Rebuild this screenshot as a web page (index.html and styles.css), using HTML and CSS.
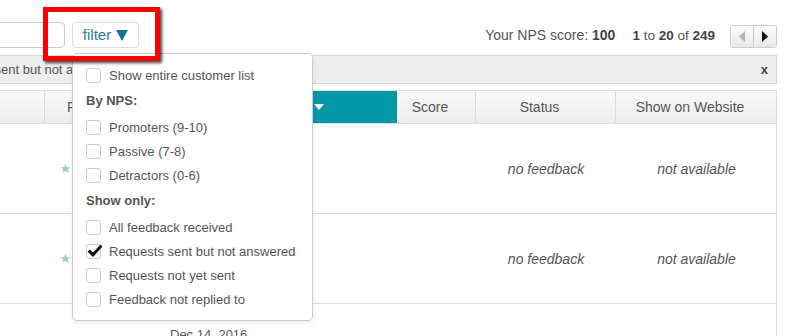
FILE: index.html
```html
<!DOCTYPE html>
<html>
<head>
<meta charset="utf-8">
<link rel="stylesheet" href="styles.css">
</head>
<body>
<div class="page">
  <div class="toolbar">
    <input class="search" type="text">
    <button class="filter-btn">filter <svg class="caret" width="12" height="11" viewBox="0 0 12 11"><path d="M0 0 L12 0 L6 11 Z" fill="#17729a"/></svg></button>
    <div class="stats">
      <span class="nps">Your NPS score: <b>100</b></span>
      <span class="range"><b>1</b> to <b>20</b> of <b>249</b></span>
      <div class="pager">
        <button class="pg prev"><svg width="6" height="11" viewBox="0 0 6 11"><path d="M6 0 L0 5.5 L6 11 Z" fill="#b5b5b5"/></svg></button>
        <button class="pg next"><svg width="6" height="11" viewBox="0 0 6 11"><path d="M0 0 L6 5.5 L0 11 Z" fill="#111"/></svg></button>
      </div>
    </div>
  </div>

  <div class="notice">
    <span class="notice-text">Requests sent but not answered</span>
    <span class="close">x</span>
  </div>

  <div class="table">
    <div class="thead">
      <div class="th"></div>
      <div class="th th-left">Feedback</div>
      <div class="th sorted">Date <svg class="sort-caret" width="10" height="6" viewBox="0 0 10 6"><path d="M0 0 L10 0 L5 6 Z" fill="#fff"/></svg></div>
      <div class="th">Score</div>
      <div class="th">Status</div>
      <div class="th">Show on Website</div>
    </div>
    <div class="tr">
      <div class="td"></div>
      <div class="td td-left"><svg class="star" width="11" height="11" viewBox="0 0 24 24"><path d="M12 1.5 L15 9 L23 9.3 L16.8 14.3 L19 22 L12 17.5 L5 22 L7.2 14.3 L1 9.3 L9 9 Z" fill="#a9c6d2"/></svg></div>
      <div class="td"></div>
      <div class="td"></div>
      <div class="td em">no feedback</div>
      <div class="td em">not available</div>
    </div>
    <div class="tr">
      <div class="td"></div>
      <div class="td td-left"><svg class="star" width="11" height="11" viewBox="0 0 24 24"><path d="M12 1.5 L15 9 L23 9.3 L16.8 14.3 L19 22 L12 17.5 L5 22 L7.2 14.3 L1 9.3 L9 9 Z" fill="#a9c6d2"/></svg></div>
      <div class="td"></div>
      <div class="td"></div>
      <div class="td em">no feedback</div>
      <div class="td em">not available</div>
    </div>
    <div class="tr tr-top">
      <div class="td"></div>
      <div class="td"></div>
      <div class="td date">Dec 14, 2016</div>
      <div class="td"></div>
      <div class="td"></div>
      <div class="td"></div>
    </div>
  </div>

  <div class="dropdown">
    <div class="opt"><span class="cb"></span>Show entire customer list</div>
    <div class="group">By NPS:</div>
    <div class="opt"><span class="cb"></span>Promoters (9-10)</div>
    <div class="opt"><span class="cb"></span>Passive (7-8)</div>
    <div class="opt"><span class="cb"></span>Detractors (0-6)</div>
    <div class="group">Show only:</div>
    <div class="opt"><span class="cb"></span>All feedback received</div>
    <div class="opt"><span class="cb checked"><svg class="tick" width="16" height="14" viewBox="0 0 16 14"><path d="M0.5 7.5 L3 5.5 L6 8.5 L13.5 0.5 L15.5 2.5 L6 13 Z" fill="#111"/></svg></span>Requests sent but not answered</div>
    <div class="opt"><span class="cb"></span>Requests not yet sent</div>
    <div class="opt"><span class="cb"></span>Feedback not replied to</div>
  </div>

  <div class="annot"></div>
</div>
</body>
</html>
```

FILE: styles.css
```css
html, body {
  margin: 0;
  padding: 0;
  background: #fff;
}
body {
  width: 785px;
  height: 336px;
  overflow: hidden;
  font-family: "Liberation Sans", Arial, sans-serif;
  color: #555;
}
.page {
  position: relative;
  width: 785px;
  height: 336px;
  overflow: hidden;
}

/* toolbar */
.toolbar {
  display: flex;
  align-items: center;
  height: 26px;
  padding: 22px 8px 0 0;
}
.search {
  box-sizing: border-box;
  width: 81px;
  height: 26px;
  margin: 0 0 0 -16px;
  border: 1px solid #ccc;
  border-radius: 4px;
  background: #fff;
}
.filter-btn {
  box-sizing: border-box;
  display: flex;
  align-items: center;
  justify-content: center;
  gap: 5px;
  margin-left: 7px;
  width: 67px;
  height: 26px;
  padding: 0 0 1px 0;
  border: 1px solid #ddd;
  border-radius: 4px;
  background: #fff;
  color: #2f7b9b;
  font-family: "Liberation Sans", Arial, sans-serif;
  font-size: 15px;
}
.caret {
  margin-top: 1px;
}
.stats {
  margin-left: auto;
  display: flex;
  align-items: center;
  font-size: 14px;
  color: #555;
}
.stats b {
  color: #444;
}
.range {
  margin-left: 17px;
  font-size: 13.5px;
}
.pager {
  display: flex;
  margin-left: 15px;
  margin-top: 3px;
  border: 1px solid #ccc;
  border-radius: 3px;
  overflow: hidden;
}
.pg {
  box-sizing: border-box;
  width: 22px;
  height: 21px;
  padding: 0;
  border: 0;
  background: linear-gradient(#fbfbfb, #e9e9e9);
  display: flex;
  align-items: center;
  justify-content: center;
}
.pg.next {
  border-left: 1px solid #ccc;
  width: 23px;
}

/* notice bar */
.notice {
  display: flex;
  align-items: center;
  justify-content: space-between;
  box-sizing: border-box;
  height: 29px;
  margin: 7px 8px 0 -100px;
  padding: 0 8px 0 35px;
  background: #eeeeee;
  border: 1px solid #d6d6d6;
  font-size: 13px;
}
.close {
  font-weight: bold;
  font-size: 13px;
  color: #444;
}

/* table */
.table {
  margin: 6px 8px 0 -50px;
}
.thead, .tr {
  display: grid;
  grid-template-columns: 95px 115px 237px 79px 140px 161px;
}
.thead {
  height: 34px;
  box-sizing: border-box;
  border-top: 1px solid #ddd;
  border-bottom: 1px solid #ddd;
  background: linear-gradient(#fafafa, #ededed);
}
.th {
  display: flex;
  align-items: center;
  justify-content: center;
  box-sizing: border-box;
  padding-right: 12px;
  border-right: 1px solid #dcdcdc;
  font-size: 14px;
  color: #555;
}
.th-left {
  justify-content: flex-start;
  padding-left: 22px;
}
.sorted {
  background: #0397a7;
  color: #fff;
  justify-content: flex-end;
  padding-right: 73px;
  border-right: 0;
  gap: 6px;
}
.tr {
  height: 90px;
  box-sizing: border-box;
  border-bottom: 1px solid #ddd;
  border-right: 1px solid #ddd;
}
.td {
  display: flex;
  align-items: center;
  justify-content: center;
  font-size: 14px;
  color: #555;
}
.td-left {
  justify-content: flex-start;
  padding-left: 15px;
}
.em {
  font-style: italic;
}
.tr-top .td {
  align-items: flex-start;
}
.date {
  justify-content: flex-start;
  padding: 23px 0 0 10px;
  font-size: 13px;
}

/* dropdown */
.dropdown {
  position: absolute;
  left: 72px;
  top: 53px;
  box-sizing: border-box;
  width: 241px;
  height: 268px;
  padding: 9px 10px 9px 13px;
  background: #fff;
  border: 1px solid #ccc;
  border-radius: 5px;
  box-shadow: 0 2px 5px rgba(0, 0, 0, 0.08);
  font-size: 13px;
  color: #555;
}
.opt {
  display: flex;
  align-items: center;
  height: 24px;
  white-space: nowrap;
}
.group {
  height: 28px;
  line-height: 28px;
  font-weight: bold;
  color: #555;
}
.cb {
  position: relative;
  box-sizing: border-box;
  flex: none;
  width: 15px;
  height: 15px;
  margin-right: 8px;
  border: 1px solid #ccc;
  border-radius: 3px;
  background: #fff;
}
.tick {
  position: absolute;
  left: 0px;
  top: -1px;
}

/* red annotation box */
.annot {
  position: absolute;
  left: 43px;
  top: 7px;
  width: 117px;
  height: 54px;
  box-sizing: border-box;
  border: 5px solid #f00;
  box-shadow: 2px 2px 3px rgba(0, 0, 0, 0.75);
}
```
